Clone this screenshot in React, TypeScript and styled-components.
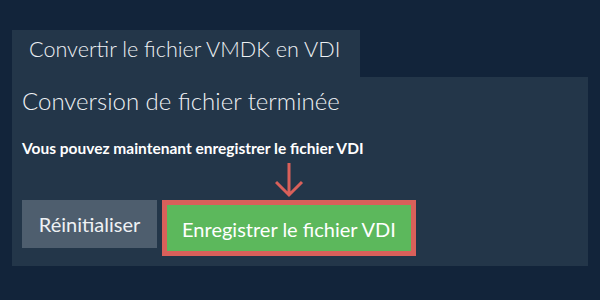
import React from "react";
import styled, { createGlobalStyle } from "styled-components";

const Global = createGlobalStyle`
  html, body { margin: 0; padding: 0; background: #12243a; }
  body { font-family: Lato, "Open Sans", sans-serif; color: #eef1f4; }
`;

const Page = styled.div`
  width: 600px;
  height: 300px;
  box-sizing: border-box;
  padding: 30px 12px 0 12px;
  background: #12243a;
`;

const Tab = styled.div`
  width: 348px;
  height: 47px;
  box-sizing: border-box;
  padding: 6px 0 0 17px;
  background: #233649;
  font-size: 21.6px;
  font-weight: 300;
  line-height: 26px;
  color: #eef1f4;
`;

const Panel = styled.div`
  width: 576px;
  height: 189px;
  box-sizing: border-box;
  padding: 9px 10px 10px 10px;
  background: #233649;
  display: flex;
  flex-direction: column;
`;

const Heading = styled.h2`
  margin: 0;
  font-weight: 300;
  font-size: 24px;
  line-height: 29px;
  color: #eef1f4;
`;

const Note = styled.p`
  margin: 24px 0 0 0;
  font-weight: 700;
  font-size: 15.5px;
  line-height: 18px;
  color: #ffffff;
`;

const Actions = styled.div`
  margin-top: 43px;
  display: flex;
  align-items: flex-start;
  gap: 5px;
`;

const ResetButton = styled.button`
  width: 135px;
  height: 48px;
  border: none;
  background: #4e5e6e;
  color: #eef1f4;
  font-family: Lato, sans-serif;
  font-size: 20px;
  padding: 0;
  cursor: pointer;
`;

const SaveWrap = styled.div`
  position: relative;
`;

const SaveButton = styled.button`
  width: 254px;
  height: 56px;
  box-sizing: border-box;
  border: 5px solid #d9605a;
  background: #5cb85c;
  color: #ffffff;
  font-family: Lato, sans-serif;
  font-size: 20px;
  padding: 2px 0 0 0;
  cursor: pointer;
`;

const Arrow = styled.svg`
  position: absolute;
  left: 113px;
  top: -38px;
  width: 30px;
  height: 36px;
`;

export default function App() {
  return (
    <>
      <Global />
      <Page>
        <Tab>Convertir le fichier VMDK en VDI</Tab>
        <Panel>
          <Heading>Conversion de fichier terminée</Heading>
          <Note>Vous pouvez maintenant enregistrer le fichier VDI</Note>
          <Actions>
            <ResetButton>Réinitialiser</ResetButton>
            <SaveWrap>
              <Arrow viewBox="0 0 30 36" fill="none">
                <path
                  d="M14 1 V33 M1 20 L14 33 L27 20"
                  stroke="#d9605a"
                  strokeWidth="3"
                />
              </Arrow>
              <SaveButton>Enregistrer le fichier VDI</SaveButton>
            </SaveWrap>
          </Actions>
        </Panel>
      </Page>
    </>
  );
}
